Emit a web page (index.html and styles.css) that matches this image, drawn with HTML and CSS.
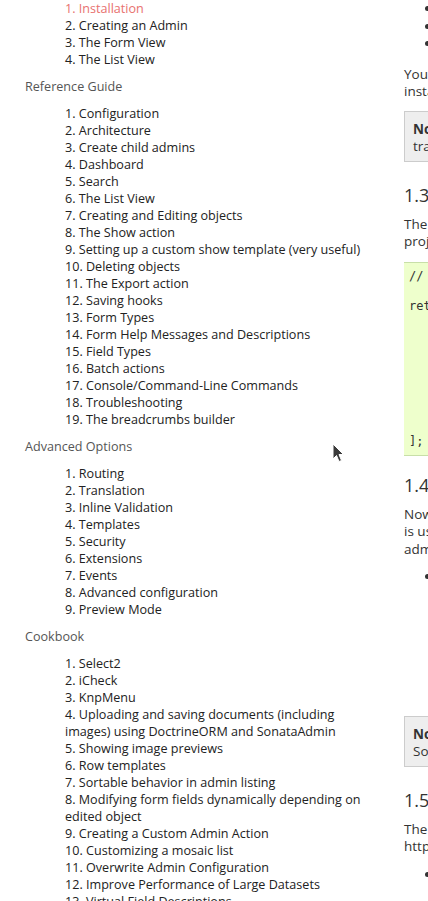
FILE: index.html
```html
<!DOCTYPE html>
<html lang="en">
<head>
    <meta charset="UTF-8">
    <meta name="viewport" content="width=device-width, initial-scale=1.0">
    <title>Installation - SonataAdminBundle</title>
    <link rel="stylesheet" href="styles.css">
</head>
<body>
    <div class="page">
        <nav class="sidebar">
            <ol class="toc-list">
                <li class="current">Installation</li>
                <li>Creating an Admin</li>
                <li>The Form View</li>
                <li>The List View</li>
            </ol>

            <p class="toc-title">Reference Guide</p>
            <ol class="toc-list">
                <li>Configuration</li>
                <li>Architecture</li>
                <li>Create child admins</li>
                <li>Dashboard</li>
                <li>Search</li>
                <li>The List View</li>
                <li>Creating and Editing objects</li>
                <li>The Show action</li>
                <li>Setting up a custom show template (very useful)</li>
                <li>Deleting objects</li>
                <li>The Export action</li>
                <li>Saving hooks</li>
                <li>Form Types</li>
                <li>Form Help Messages and Descriptions</li>
                <li>Field Types</li>
                <li>Batch actions</li>
                <li>Console/Command-Line Commands</li>
                <li>Troubleshooting</li>
                <li>The breadcrumbs builder</li>
            </ol>

            <p class="toc-title">Advanced Options</p>
            <ol class="toc-list">
                <li>Routing</li>
                <li>Translation</li>
                <li>Inline Validation</li>
                <li>Templates</li>
                <li>Security</li>
                <li>Extensions</li>
                <li>Events</li>
                <li>Advanced configuration</li>
                <li>Preview Mode</li>
            </ol>

            <p class="toc-title">Cookbook</p>
            <ol class="toc-list">
                <li>Select2</li>
                <li>iCheck</li>
                <li>KnpMenu</li>
                <li>Uploading and saving documents (including images) using DoctrineORM and SonataAdmin</li>
                <li>Showing image previews</li>
                <li>Row templates</li>
                <li>Sortable behavior in admin listing</li>
                <li>Modifying form fields dynamically depending on edited object</li>
                <li>Creating a Custom Admin Action</li>
                <li>Customizing a mosaic list</li>
                <li>Overwrite Admin Configuration</li>
                <li>Improve Performance of Large Datasets</li>
                <li>Virtual Field Descriptions</li>
                <li>Persisting Filters</li>
            </ol>
        </nav>

        <main class="content">
            <ul class="bullets">
                <li>SonataDoctrineMongoDBAdminBundle (integrates the Doctrine MongoDB ODM);</li>
                <li>SonataPropelAdminBundle (integrates Propel);</li>
                <li>SonataDoctrinePhpcrAdminBundle (integrates the Doctrine PHPCR ODM).</li>
            </ul>

            <p>You can download them in the same way as the SonataAdminBundle. The bundle specific<br>
            installation instructions can be found in their own documentation.</p>

            <div class="note">
                <p><strong>Note:</strong> Don't know which to choose? Most new users prefer SonataDoctrineORMAdmin, to interact with<br>
                traditional relational databases (MySQL, PostgreSQL, etc).</p>
            </div>

            <h2>1.3. Enable the Bundle</h2>
            <p>The bundle and the bundles it relies on are enabled by adding the following lines in the bundles.php file of your<br>
            project:</p>
<pre class="code">// config/bundles.php

return [
    // ...
    Sonata\CoreBundle\SonataCoreBundle::class => ['all' => true],
    Sonata\BlockBundle\SonataBlockBundle::class => ['all' => true],
    Knp\Bundle\MenuBundle\KnpMenuBundle::class => ['all' => true],
    Sonata\AdminBundle\SonataAdminBundle::class => ['all' => true],
    Sonata\DoctrineORMAdminBundle\SonataDoctrineORMAdminBundle::class => ['all' => true],
    Symfony\Bundle\SecurityBundle\SecurityBundle::class => ['all' => true],
    Symfony\Bundle\TwigBundle\TwigBundle::class => ['all' => true],
];</pre>

            <h2>1.4. Configure the Installed Bundles</h2>
            <p>Now all needed bundles are downloaded and registered, you have to add some configurations. The admin interface<br>
            is using SonataBlockBundle to put everything in blocks. You just have to tell the block bundle about the existence of the<br>
            admin block:</p>
            <ul class="bullets">
                <li>YAML
<pre class="code"># config/packages/sonata_admin.yaml

sonata_block:
    blocks:
        sonata.admin.block.admin_list:
            contexts: [admin]</pre>
                </li>
            </ul>

            <div class="note">
                <p><strong>Note:</strong> Don't worry too much if, at this point, you don't yet understand fully what a block is. The<br>
                SonataBlockBundle is a useful tool, but it's not vital that you understand it in order to use the admin bundle.</p>
            </div>

            <h2>1.5. Define routes</h2>
            <p>The bundles are now registered and configured correctly. To be able to access SonataAdminBundle's pages, see<br>
            https://symfony.com/doc/current/routing.html for the routes provided by the SonataAdminBundle:</p>
            <ul class="bullets">
                <li>YAML</li>
            </ul>
        </main>
    </div>

    <!-- mouse pointer left in the capture -->
    <svg class="pointer" viewBox="0 0 13 20" width="13" height="20">
        <path d="M1 1 L1 16 L4.5 12.5 L7 18.5 L9.5 17.5 L7 11.5 L11.5 11.5 Z" fill="#3a3a3a" stroke="#fff" stroke-width="1" stroke-linejoin="round" />
    </svg>
</body>
</html>
```

FILE: styles.css
```css
html, body {
    overflow: hidden;
}

body {
    margin: 0;
    background: #fff;
    font-family: 'Open Sans', 'Liberation Sans', Arial, sans-serif;
    font-size: 12.6px;
    color: #333;
}

.page {
    display: flex;
    align-items: flex-start;
}

/* left navigation */

.sidebar {
    flex: none;
    width: 350px;
    padding-left: 25px;
    line-height: 17px;
}

.toc-list {
    margin: 0;
    padding-left: 40px;
    list-style: decimal inside;
    color: #222;
}

.toc-list li.current {
    color: #e8716f;
}

.toc-title {
    margin: 10px 0;
    color: #555;
}

/* main text */

.content {
    flex: none;
    width: 820px;
    margin-left: 29px;
    font-size: 13.5px;
    line-height: 17.5px;
}

.content p {
    margin: 0 0 10px;
}

.bullets {
    margin: 0 0 13px;
    padding-left: 37px;
    list-style: disc;
}

.content h2 {
    margin: 18px 0 10px;
    font-size: 18px;
    font-weight: normal;
    line-height: 22px;
    color: #333;
}

.note {
    margin: 0 0 22px;
    padding: 9px 8px 5px;
    background: #eee;
    border: 1px solid #ccc;
}

.note p {
    margin: 0;
}

.code {
    margin: 11px 0 0;
    padding: 6px 5px;
    background: #eeffcc;
    border-top: 1px solid #c8dfa8;
    border-bottom: 1px solid #c8dfa8;
    font-family: 'DejaVu Sans Mono', 'Liberation Mono', monospace;
    font-size: 12px;
    line-height: 15px;
    color: #333;
}

.bullets .code {
    margin-top: 13px;
}

.pointer {
    position: absolute;
    left: 332px;
    top: 443px;
}
```
